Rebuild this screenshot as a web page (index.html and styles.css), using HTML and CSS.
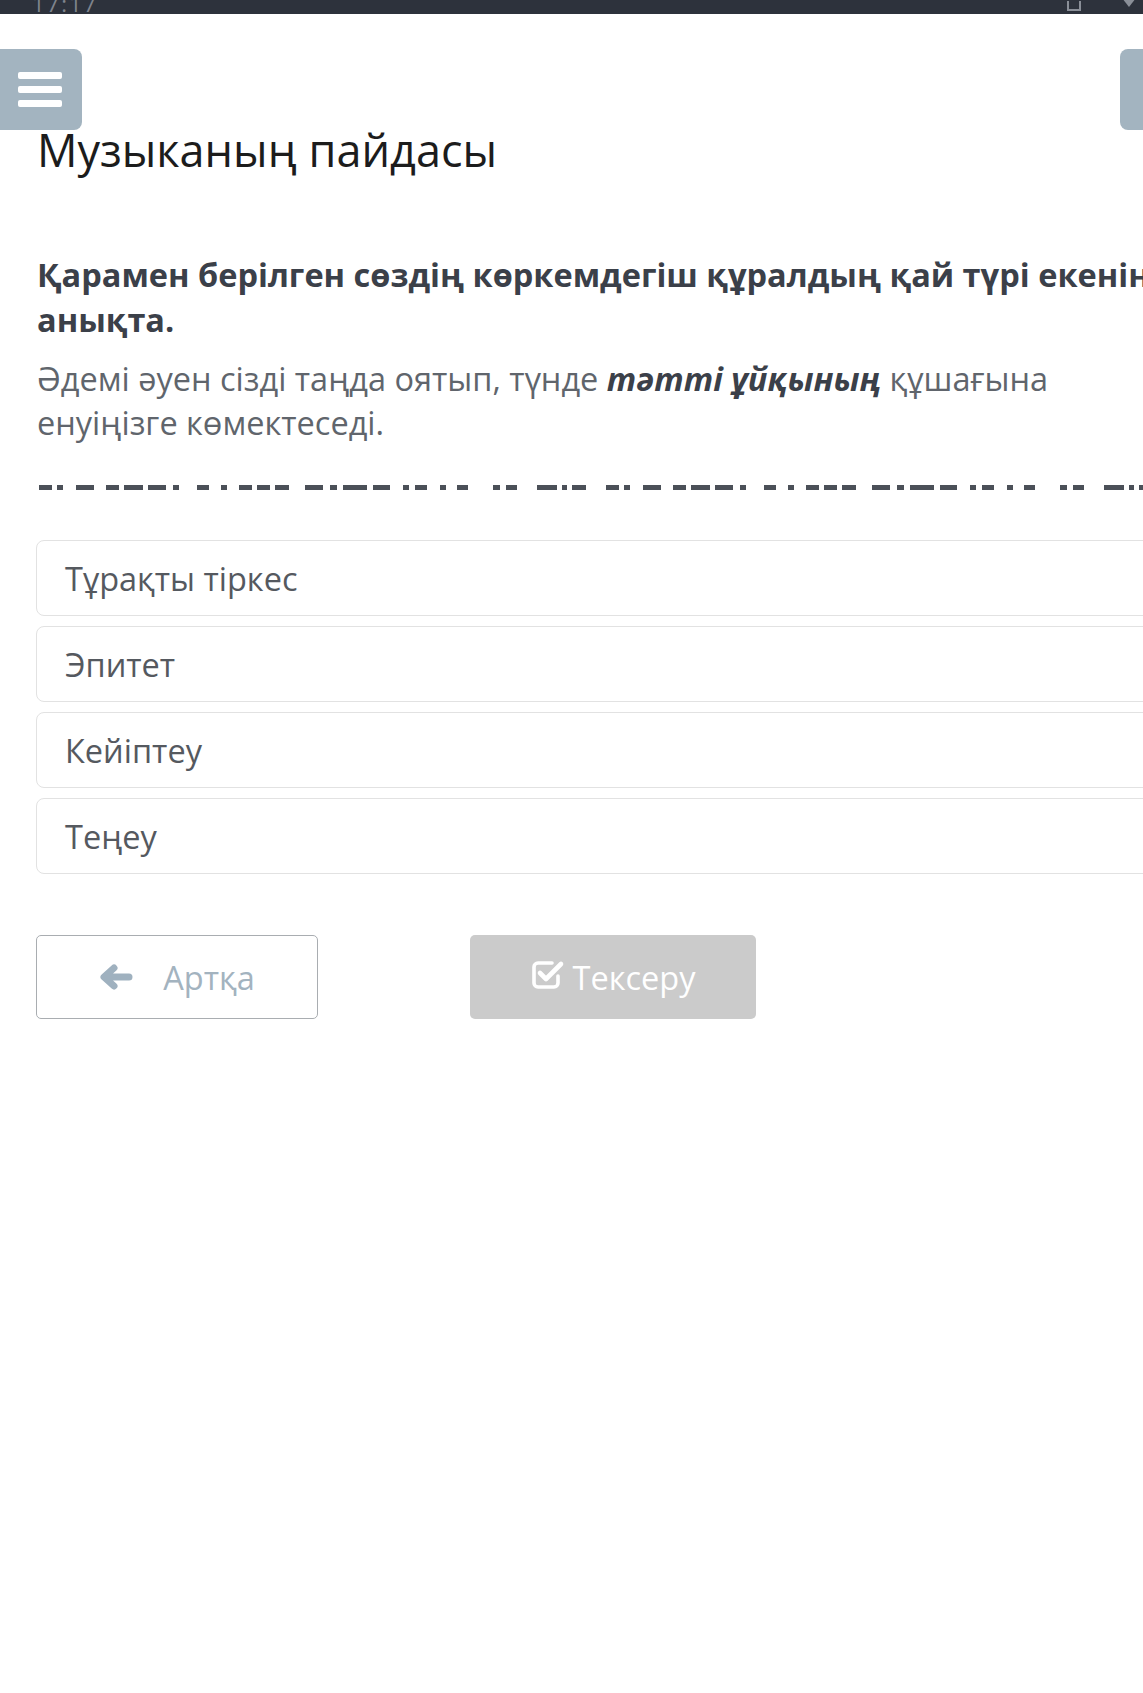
FILE: index.html
```html
<!DOCTYPE html>
<html lang="kk">
<head>
<meta charset="utf-8">
<title>Музыканың пайдасы</title>
<link rel="stylesheet" href="styles.css">
</head>
<body>
<div class="status">
  <span class="time">17:17</span>
  <span class="status-icons">
    <span class="sq"></span>
    <svg class="sig" width="16" height="12" viewBox="0 0 16 12"><path d="M1 0 H15 L8 9 Z" fill="#8a8f98"/></svg>
  </span>
</div>
<header class="topbar">
  <button class="side-btn menu-btn" aria-label="menu">
    <span class="bar"></span><span class="bar"></span><span class="bar"></span>
  </button>
  <button class="side-btn right-btn" aria-label="more"></button>
</header>
<main class="page">
  <h1 class="title">Музыканың пайдасы</h1>
  <p class="question">Қарамен берілген сөздің көркемдегіш құралдың қай түрі екенін анықта.</p>
  <p class="sentence">Әдемі әуен сізді таңда оятып, түнде <b><i>тәтті ұйқының</i></b> құшағына енуіңізге көмектеседі.</p>
  <svg class="rule" width="1200" height="5" viewBox="0 0 1200 5">
    <defs>
      <pattern id="dash" width="567" height="5" patternUnits="userSpaceOnUse">
        <g fill="#4b5058">
          <rect x="3" y="0" width="13" height="5"/>
          <rect x="21" y="0" width="6" height="5"/>
          <rect x="40" y="0" width="18" height="5"/>
          <rect x="70" y="0" width="13" height="5"/>
          <rect x="88" y="0" width="19" height="5"/>
          <rect x="112" y="0" width="18" height="5"/>
          <rect x="137" y="0" width="6" height="5"/>
          <rect x="161" y="0" width="12" height="5"/>
          <rect x="185" y="0" width="6" height="5"/>
          <rect x="203" y="0" width="13" height="5"/>
          <rect x="221" y="0" width="13" height="5"/>
          <rect x="239" y="0" width="14" height="5"/>
          <rect x="269" y="0" width="18" height="5"/>
          <rect x="294" y="0" width="7" height="5"/>
          <rect x="307" y="0" width="24" height="5"/>
          <rect x="337" y="0" width="17" height="5"/>
          <rect x="367" y="0" width="6" height="5"/>
          <rect x="379" y="0" width="12" height="5"/>
          <rect x="404" y="0" width="6" height="5"/>
          <rect x="421" y="0" width="11" height="5"/>
          <rect x="457" y="0" width="7" height="5"/>
          <rect x="470" y="0" width="11" height="5"/>
          <rect x="501" y="0" width="20" height="5"/>
          <rect x="526" y="0" width="5" height="5"/>
          <rect x="536" y="0" width="14" height="5"/>
        </g>
      </pattern>
    </defs>
    <rect x="0" y="0" width="1200" height="5" fill="url(#dash)"/>
  </svg>
  <ul class="options">
    <li class="option">Тұрақты тіркес</li>
    <li class="option">Эпитет</li>
    <li class="option">Кейіптеу</li>
    <li class="option">Теңеу</li>
  </ul>
  <div class="actions">
    <button class="btn btn-back">
      <svg class="ico-arrow" width="34" height="26" viewBox="0 0 34 26"><path d="M30 13 H6 M15 4 L5 13 L15 22" fill="none" stroke="#9fb1bf" stroke-width="7" stroke-linecap="round" stroke-linejoin="round"/></svg>
      <span>Артқа</span>
    </button>
    <button class="btn btn-check">
      <svg class="ico-check" width="34" height="30" viewBox="0 0 34 30"><path d="M21 3 H7 a4 4 0 0 0 -4 4 v16 a4 4 0 0 0 4 4 h16 a4 4 0 0 0 4 -4 v-7" fill="none" stroke="#fff" stroke-width="3.6" stroke-linecap="round"/><path d="M9 13 L15 19 L30 4" fill="none" stroke="#fff" stroke-width="4.6" stroke-linecap="round" stroke-linejoin="round"/></svg>
      <span>Тексеру</span>
    </button>
  </div>
</main>
</body>
</html>
```

FILE: styles.css
```css
html, body {
  margin: 0;
  padding: 0;
  overflow: hidden;
  background: #ffffff;
}

body {
  width: 1143px;
  font-family: "Open Sans", "Noto Sans", sans-serif;
}

.status {
  height: 14px;
  background: #2d323c;
  overflow: hidden;
  display: flex;
  align-items: flex-end;
  justify-content: space-between;
  padding: 0 6px 0 32px;
}

.time {
  font-size: 22px;
  line-height: 22px;
  color: #7f848d;
  letter-spacing: 2px;
}

.status-icons {
  display: flex;
  align-items: flex-end;
  gap: 40px;
  height: 14px;
}

.sq {
  width: 10px;
  height: 8px;
  border: 2px solid #8a8f98;
  border-top: none;
  margin-bottom: 3px;
}

.sig {
  margin-bottom: 4px;
}

.topbar {
  display: flex;
  justify-content: space-between;
  margin-top: 35px;
  height: 81px;
}

.side-btn {
  width: 82px;
  height: 81px;
  border: none;
  background: #a3b4c0;
  padding: 0;
}

.menu-btn {
  border-radius: 0 8px 8px 0;
  display: flex;
  flex-direction: column;
  justify-content: center;
  align-items: center;
  gap: 7px;
  padding-right: 2px;
}

.bar {
  display: block;
  width: 44px;
  height: 7px;
  background: #ffffff;
  border-radius: 2px;
}

.right-btn {
  border-radius: 8px 0 0 8px;
  margin-right: -59px;
}

.page {
  width: 1150px;
  padding-left: 36px;
}

.title {
  margin: -7px 0 0 1px;
  font-size: 45px;
  line-height: 54px;
  font-weight: 400;
  color: #1c1c1c;
}

.question {
  margin: 75px 0 0 1px;
  font-size: 32.5px;
  line-height: 45px;
  font-weight: 700;
  color: #3b4049;
}

.sentence {
  margin: 15px 0 0 1px;
  font-size: 32.5px;
  line-height: 44px;
  color: #60656c;
}

.sentence b {
  color: #3b4049;
}

.rule {
  display: block;
  margin-top: 40px;
}

.options {
  list-style: none;
  margin: 50px 0 0 0;
  padding: 0;
  width: 1160px;
  display: flex;
  flex-direction: column;
  gap: 10px;
}

.option {
  height: 74px;
  border: 1px solid #e2e2e2;
  border-radius: 8px;
  display: flex;
  align-items: center;
  padding-left: 28px;
  font-size: 32.5px;
  color: #55595f;
}

.actions {
  display: flex;
  gap: 152px;
  margin-top: 61px;
}

.btn {
  height: 84px;
  border-radius: 5px;
  display: flex;
  align-items: center;
  justify-content: center;
  font-family: "Open Sans", "Noto Sans", sans-serif;
  font-size: 32.5px;
  padding: 0;
}

.btn-back {
  width: 282px;
  background: #ffffff;
  border: 1px solid #a9adb1;
  color: #a3b3bf;
  gap: 30px;
}

.btn-check {
  width: 286px;
  background: #cbcbcb;
  border: none;
  color: #ffffff;
  gap: 8px;
}

.ico-check {
  margin-top: -4px;
}
```
